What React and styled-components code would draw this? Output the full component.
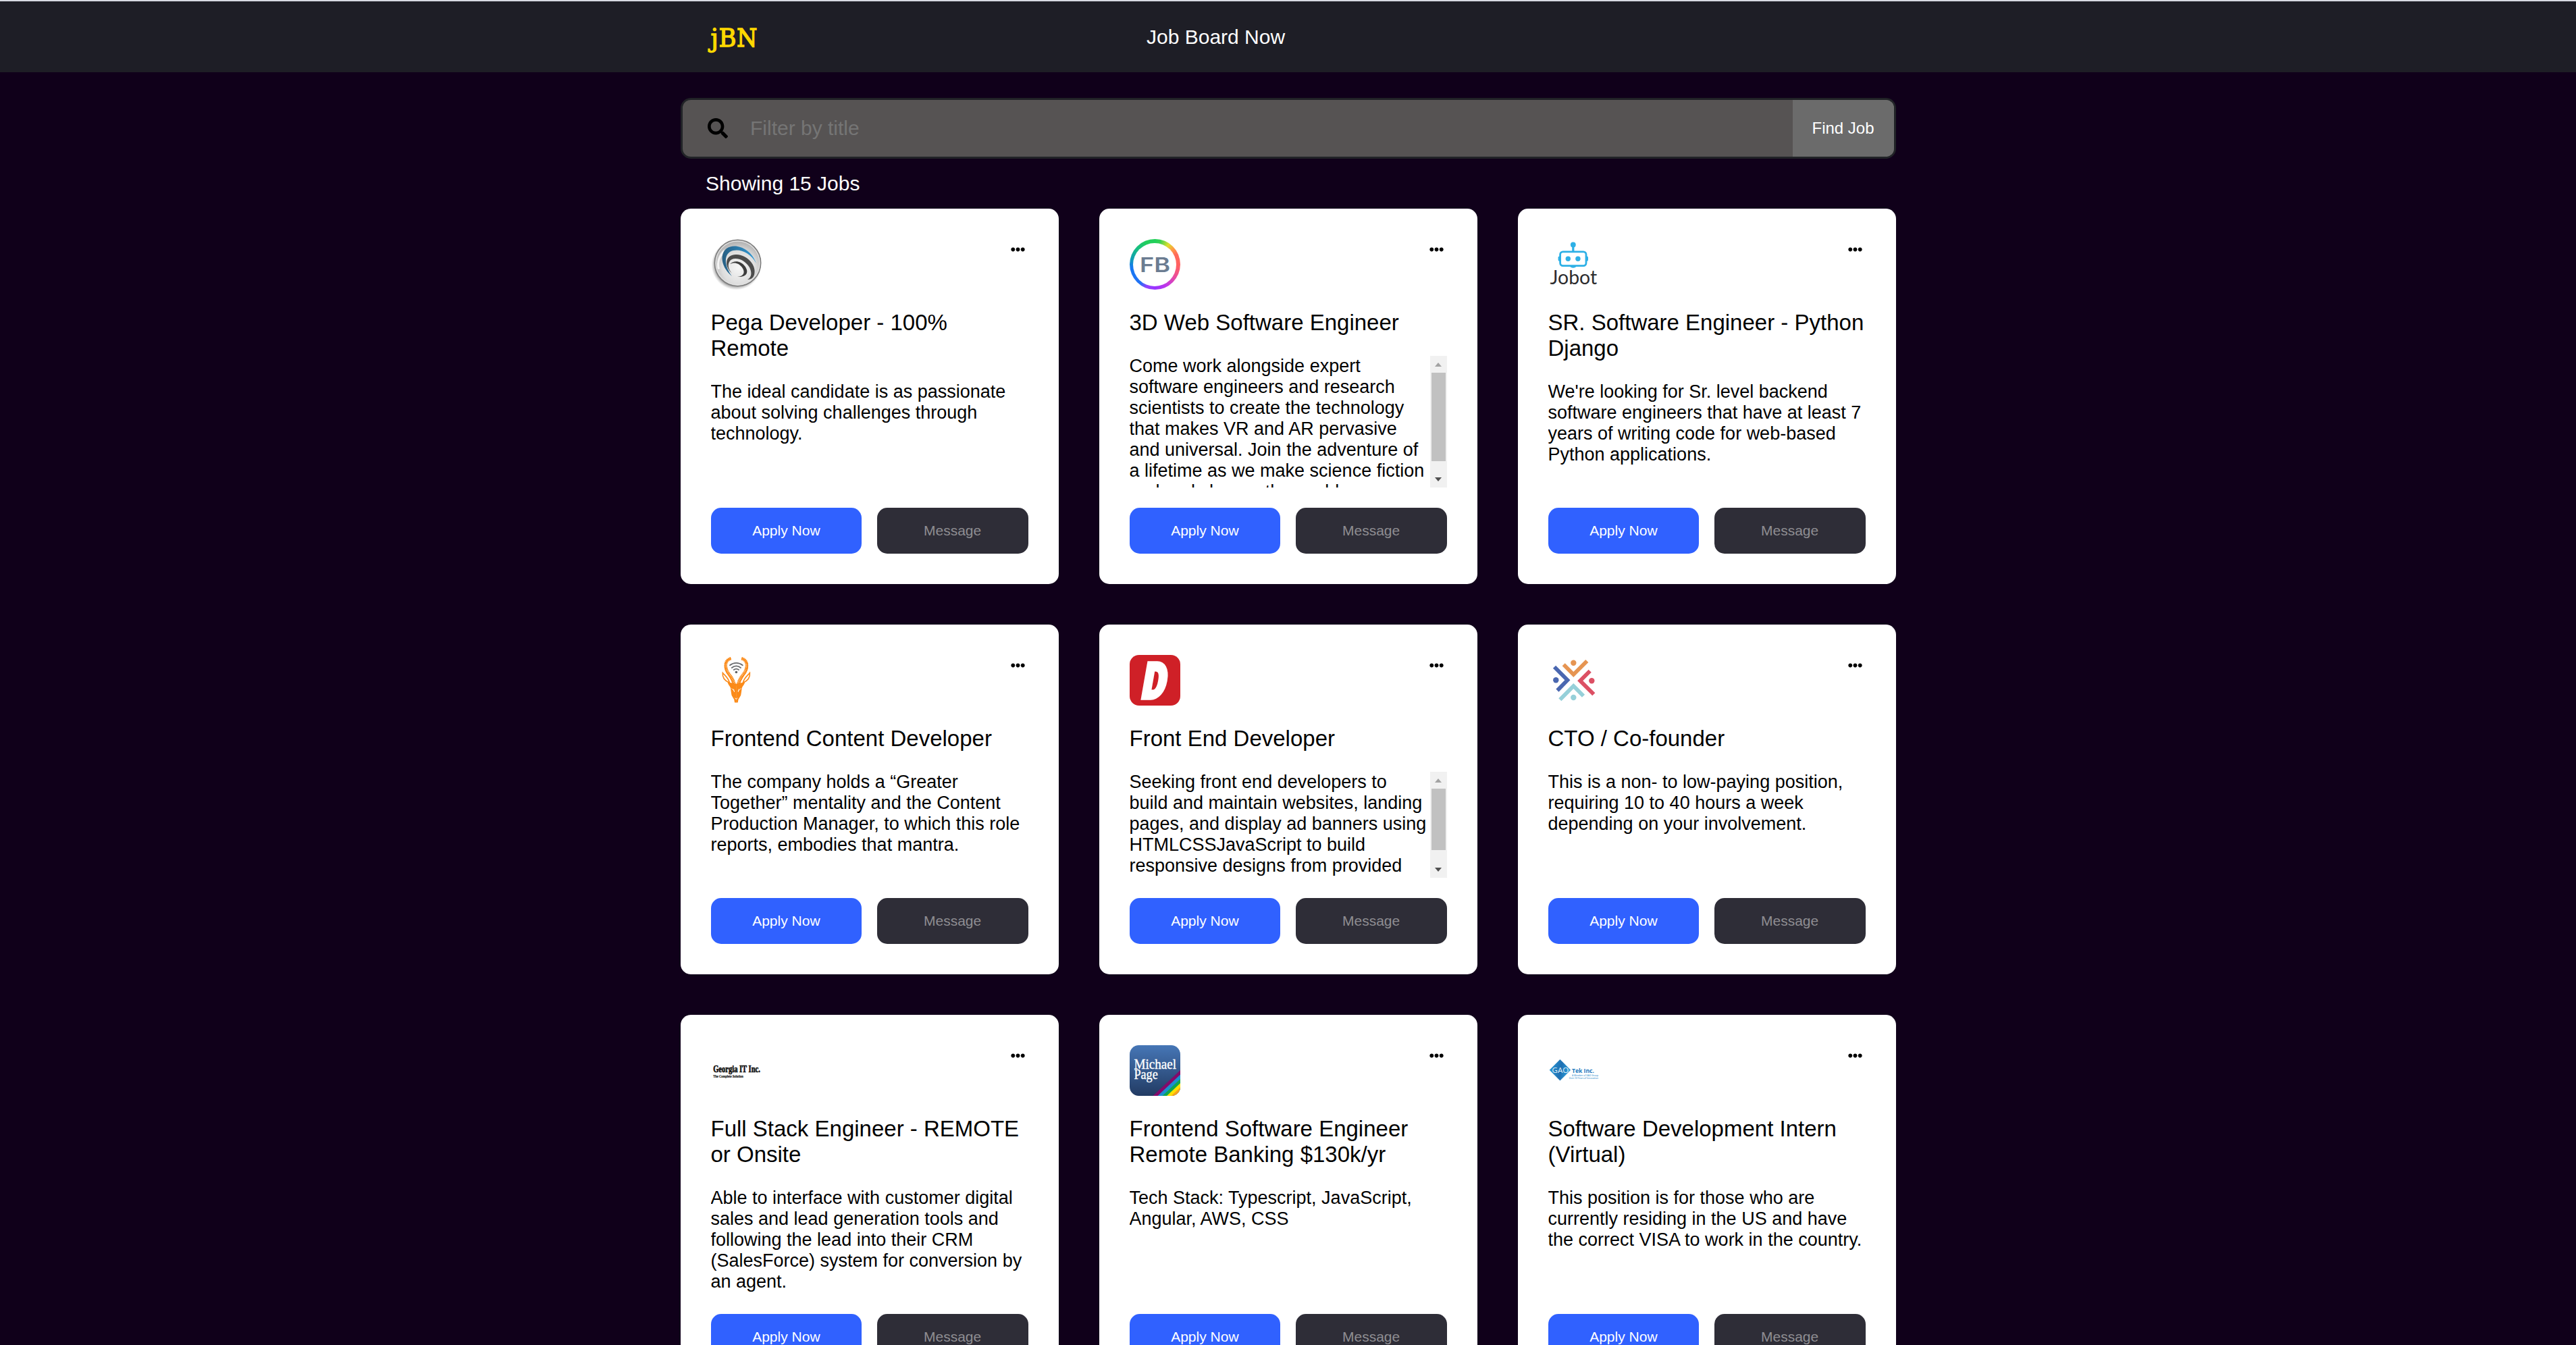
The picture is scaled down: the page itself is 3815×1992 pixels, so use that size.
import React from "react";
import styled, { createGlobalStyle } from "styled-components";
import { FaSearch, FaEllipsisH } from "react-icons/fa";

const GlobalStyle = createGlobalStyle`
  * { box-sizing: border-box; }
  body {
    margin: 0;
    background: #10001a;
    font-family: "Liberation Sans", Arial, sans-serif;
    overflow: hidden;
  }
`;

const Page = styled.div`
  height: 1992px;
  overflow: hidden;
  background: #10001a;
`;

const Header = styled.header`
  height: 107px;
  border-top: 2px solid #d8dae2;
  background: #1e1e26;
`;

const Container = styled.div`
  width: 1800px;
  margin: 0 auto;
`;

const HeaderInner = styled(Container)`
  height: 100%;
  display: flex;
  align-items: center;
  padding-left: 37.5px;
`;

const BrandLogo = styled.svg`
  width: 80px;
  height: 75px;
  overflow: visible;
`;

const SiteTitle = styled.h1`
  margin: 0 0 0 573px;
  font-size: 30px;
  line-height: 34px;
  font-weight: 400;
  color: #fff;
`;

const SearchBar = styled.form`
  display: flex;
  align-items: center;
  height: 90px;
  margin-top: 38px;
  padding-left: 37.5px;
  border: 3px solid #212327;
  border-radius: 15px;
  background: #565353;
  overflow: hidden;
`;

const SearchIcon = styled(FaSearch)`
  flex: none;
  width: 30px;
  height: 30px;
  color: #000;
`;

const SearchInput = styled.input`
  flex: 1;
  min-width: 0;
  height: 100%;
  padding: 0 0 0 33px;
  border: 0;
  outline: 0;
  background: transparent;
  font: 30px "Liberation Sans", Arial, sans-serif;
  color: #fff;
  &::placeholder { color: #757575; }
`;

const FindButton = styled.button`
  width: 150px;
  height: 100%;
  padding: 0;
  border: 0;
  background: #6b6b6b;
  color: #fff;
  font: 24px "Liberation Sans", Arial, sans-serif;
`;

const ResultCount = styled.p`
  margin: 19px 0 20px;
  padding-left: 37.5px;
  font-size: 30px;
  line-height: 35px;
  color: #fff;
`;

const Grid = styled.main`
  display: grid;
  grid-template-columns: repeat(3, 560px);
  gap: 60px;
`;

const Card = styled.article`
  display: flex;
  flex-direction: column;
  padding: 45px;
  border-radius: 15px;
  background: #fff;
  color: #000;
`;

const CardTop = styled.div`
  display: flex;
  justify-content: space-between;
  height: 75px;
`;

const LogoSvg = styled.svg`
  width: 75px;
  height: 75px;
  overflow: visible;
`;

const MoreIcon = styled(FaEllipsisH)`
  width: 21px;
  height: 21px;
  margin: 4.5px 4.5px 0 0;
`;

const JobTitle = styled.h2`
  margin: 30px 0;
  font-size: 33px;
  line-height: 38px;
  font-weight: 400;
`;

const DescriptionBox = styled.div`
  display: flex;
  flex-grow: 1;
  height: 157px;
  overflow: hidden;
`;

const Description = styled.p`
  flex: 1;
  margin: 0;
  font-size: 27px;
  line-height: 31px;
`;

const ScrollTrack = styled.div`
  display: flex;
  flex-direction: column;
  align-items: center;
  width: 25px;
  background: #f1f1f1;
`;

const ScrollArrow = styled.span`
  display: flex;
  flex: none;
  align-items: center;
  justify-content: center;
  height: 25px;
  &::before {
    content: "";
    border: 5.5px solid transparent;
    ${(p) =>
      p.$down
        ? "border-top: 6px solid #505050; border-bottom: 0;"
        : "border-bottom: 6px solid #a3a3a3; border-top: 0;"}
  }
`;

const ScrollThumb = styled.span`
  width: 21px;
  height: ${(p) => p.$length}px;
  margin-bottom: auto;
  background: #c1c1c1;
`;

const Actions = styled.div`
  display: flex;
  gap: 22.5px;
  margin-top: 30px;
`;

const ActionButton = styled.button`
  flex: 1;
  height: 68px;
  padding: 0;
  border: 0;
  border-radius: 15px;
  font: 21px "Liberation Sans", Arial, sans-serif;
  background: ${(p) => (p.$primary ? "#3061ff" : "#2e2d37")};
  color: ${(p) => (p.$primary ? "#fff" : "#8e8d92")};
`;

const RingLogo = styled.div`
  display: grid;
  place-items: center;
  width: 75px;
  height: 75px;
  border-radius: 50%;
  background: conic-gradient(
    #22cf5b 0deg, #35d153 12deg, #dce02c 34deg, #ff9a45 50deg, #ff6a5a 65deg, #ff5f62 95deg,
    #ec4e98 120deg, #c236e6 150deg, #9b33ff 178deg, #9340ff 200deg, #2272f5 218deg,
    #1678f2 262deg, #10a0b0 285deg, #17bd85 310deg, #22cf5b 340deg
  );
`;

const RingCenter = styled.div`
  display: grid;
  place-items: center;
  width: 64px;
  height: 64px;
  border-radius: 50%;
  background: #fff;
`;

function PegaLogo() {
  return (
    <LogoSvg viewBox="0 0 75 75">
      <defs>
        <radialGradient id="orb" cx="0.52" cy="0.6" r="0.55">
          <stop offset="0" stopColor="#f6f6f6" />
          <stop offset="0.65" stopColor="#dedede" />
          <stop offset="1" stopColor="#b4b4b4" />
        </radialGradient>
        <radialGradient id="orbShadow">
          <stop offset="0.85" stopColor="#777" stopOpacity="0.65" />
          <stop offset="1" stopColor="#999" stopOpacity="0" />
        </radialGradient>
        <linearGradient id="orbBlue" x1="0" x2="1">
          <stop offset="0" stopColor="#285f83" />
          <stop offset="1" stopColor="#2f9bd8" />
        </linearGradient>
      </defs>
      <circle cx="37.5" cy="38.5" r="37" fill="url(#orbShadow)" />
      <circle cx="39.5" cy="35.5" r="34.2" fill="url(#orb)" stroke="#7e7e7e" strokeWidth="1.6" />
      <circle cx="39.5" cy="35.5" r="32.4" fill="none" stroke="#e3e3e3" strokeWidth="1.2" />
      <path d="M10 45C7 35 11 22 20 15L17 24C12 30 11 37 13 44Z" fill="#fff" opacity="0.8" />
      <path d="M67 36C59 13 35 5 23 14C11 24 17 44 31 55C20 40 19 25 28 19C39 13 57 18 67 36Z" fill="url(#orbBlue)" />
      <path d="M31 51C17 37 23 22 38 23C55 24 68 40 64 53C62 59 58 60 54 60C60 57 61 50 57 42C49 28 31 25 27 34C24 40 27 46 31 51Z" fill="#4c4c4c" />
      <path d="M28 37C34 31 44 32 50 40C57 49 53 57 39 56C49 55 51 49 46 42C41 35 34 34 28 37Z" fill="#3c3c3c" />
    </LogoSvg>
  );
}

function FacebookLogo() {
  return (
    <RingLogo>
      <RingCenter>
        <svg width="64" height="64" viewBox="5.5 5.5 64 64">
          <text x="15.6" y="48.4" fontFamily="Inter, sans-serif" fontWeight="600" fontSize="29.6" textLength="45" lengthAdjust="spacingAndGlyphs" fill="#6b7c91">FB</text>
        </svg>
      </RingCenter>
    </RingLogo>
  );
}

function JobotLogo() {
  return (
    <LogoSvg viewBox="0 0 75 75">
      <g fill="#2db0e6">
        <circle cx="36.8" cy="8.4" r="3.9" />
        <rect x="35.2" y="10" width="3.2" height="8" />
        <circle cx="29.3" cy="29.2" r="3.7" />
        <circle cx="43.9" cy="29.2" r="3.7" />
        <rect x="14.6" y="25.5" width="4" height="7.4" rx="1.8" />
        <rect x="55" y="25.5" width="4" height="7.4" rx="1.8" />
        <path d="M32 40H41.5C41 43.6 32.6 43.6 32 40Z" />
      </g>
      <rect x="17.6" y="18.8" width="38.4" height="20.8" rx="4" fill="none" stroke="#2db0e6" strokeWidth="2.8" />
      <text x="2.6" y="67" fontFamily="Lato, sans-serif" fontSize="29" textLength="69.5" lengthAdjust="spacingAndGlyphs" fill="#2c2c2e">Jobot</text>
    </LogoSvg>
  );
}

function AntelopeLogo() {
  const half = (
    <g>
      <path d="M29.5 5.3C19 8 20.5 20 26 27.5C31 34 33.6 39 35.4 46" fill="none" stroke="#fb8a18" strokeWidth="4.6" strokeDasharray="1.7 0.5" />
      <path d="M29.5 5.3C18 8.5 19 21 25 28.5C30 35 32 40 34 47" fill="none" stroke="#fb8a18" strokeWidth="1.6" />
      <path d="M27.5 41.5C20 38 16.5 33 17.3 26.5C20 30 26 34 27.5 41.5Z" fill="#fff" stroke="#fb8a18" strokeWidth="1.6" />
      <path d="M37.5 43C33 42 30 41 24.5 40.5C25.5 44.5 28 46 29 49C29.6 54 30 57 30.6 60L34.2 66L35 70.5H37.5Z" fill="#fb8a18" />
      <path d="M30.5 49.5L34.5 53.5M33.5 50.5L34.5 55" stroke="#fff" strokeWidth="0.9" />
      <path d="M35.3 63.8L37.4 65V66" stroke="#fff" strokeWidth="0.8" fill="none" />
    </g>
  );
  return (
    <LogoSvg viewBox="0 0 75 75">
      {half}
      <g transform="translate(74.7 0) scale(-1 1)">{half}</g>
      <g fill="none" stroke="#6b6d70" strokeWidth="1.9" strokeLinecap="round">
        <path d="M28 15.2C33.5 10.8 41.3 10.8 46.8 15.2" />
        <path d="M30.8 19C34.8 15.7 40 15.7 44 19" />
        <path d="M33.8 22C36 20.3 38.8 20.3 41 22" />
      </g>
      <circle cx="37.4" cy="25.5" r="1.8" fill="#5b5d60" />
    </LogoSvg>
  );
}

function DLogo() {
  return (
    <LogoSvg viewBox="0 0 75 75">
      <rect width="75" height="75" rx="14" fill="#cf2027" />
      <g transform="translate(16 63.6) skewX(-10) scale(0.74 1)">
        <text x="0" y="0" fontFamily="Roboto, sans-serif" fontWeight="900" fontSize="73" fill="#fff" stroke="#fff" strokeWidth="5.5">D</text>
      </g>
    </LogoSvg>
  );
}

function CollabLogo() {
  return (
    <LogoSvg viewBox="0 0 75 75">
      <g fill="none" strokeWidth="5.8">
        <path d="M22.7 14.3L37.3 29L57.3 9" stroke="#e69552" />
        <path d="M9 17.7L28.4 37.3L13.4 52.6" stroke="#4a67b0" />
        <path d="M61.7 23.7L47.2 38.3L67.3 58.3" stroke="#dc5064" />
        <path d="M17.3 66.3L37.3 46L52 60.7" stroke="#96d0d9" />
      </g>
      <circle cx="37.3" cy="11.8" r="4.2" fill="#e69552" />
      <circle cx="11.3" cy="37.3" r="4.2" fill="#4a67b0" />
      <circle cx="64.3" cy="38.3" r="4.2" fill="#dc5064" />
      <circle cx="37.3" cy="63" r="4.2" fill="#96d0d9" />
    </LogoSvg>
  );
}

function GeorgiaLogo() {
  return (
    <LogoSvg viewBox="0 0 75 75" fontFamily="Liberation Serif, serif" fontWeight="700" fill="#111" stroke="#111">
      <text x="3.2" y="40.2" fontSize="15.4" strokeWidth="0.7" textLength="69.6" lengthAdjust="spacingAndGlyphs">Georgia IT Inc.</text>
      <text x="3.2" y="47.6" fontSize="5.8" strokeWidth="0.2" textLength="44.6" lengthAdjust="spacingAndGlyphs">The Complete Solution</text>
    </LogoSvg>
  );
}

function MichaelPageLogo() {
  return (
    <LogoSvg viewBox="0 0 75 75">
      <defs>
        <linearGradient id="mpBlue" x1="0" y1="0" x2="0" y2="1">
          <stop offset="0" stopColor="#4676b6" />
          <stop offset="1" stopColor="#223b63" />
        </linearGradient>
        <clipPath id="mpClip"><rect width="75" height="75" rx="13.5" /></clipPath>
      </defs>
      <g clipPath="url(#mpClip)">
        <rect width="75" height="75" fill="url(#mpBlue)" />
        <path d="M34.5 75L75 37V75Z" fill="#830a6b" />
        <path d="M41.5 75L75 43.5V75Z" fill="#1b8fd0" />
        <path d="M48.5 75L75 50V75Z" fill="#0fa650" />
        <path d="M55 75L75 56.3V75Z" fill="#ffe000" />
        <path d="M61.5 75L75 62.5V75Z" fill="#f9a11f" />
      </g>
      <g fontFamily="Liberation Serif, serif" fontSize="20.5" fill="#fff" stroke="#fff" strokeWidth="0.35">
        <text x="6.4" y="35.4" textLength="62.6" lengthAdjust="spacingAndGlyphs">Michael</text>
        <text x="6.4" y="50.4" textLength="35.4" lengthAdjust="spacingAndGlyphs">Page</text>
      </g>
    </LogoSvg>
  );
}

function GaoLogo() {
  return (
    <LogoSvg viewBox="0 0 75 75" fontFamily="Open Sans, sans-serif">
      <defs>
        <linearGradient id="gaoBlue" x1="0" y1="0" x2="1" y2="0.2">
          <stop offset="0" stopColor="#2a9bd8" />
          <stop offset="0.6" stopColor="#1f70b2" />
          <stop offset="1" stopColor="#2c9fdb" />
        </linearGradient>
      </defs>
      <path d="M1.7 36.8L17.4 21L33.2 36.8L17.4 52.6Z" fill="url(#gaoBlue)" />
      <text x="5.6" y="40.9" fontSize="11.4" textLength="24.6" lengthAdjust="spacingAndGlyphs" fill="#e4f2fa">GAO</text>
      <text x="35" y="41" fontSize="9.6" fontWeight="700" textLength="33" lengthAdjust="spacingAndGlyphs" fill="#2278bd">Tek Inc.</text>
      <g fontSize="3.5" fontWeight="600" fill="#4f9fd4">
        <text x="35" y="45.6" textLength="39" lengthAdjust="spacingAndGlyphs">A Member of GAO Group</text>
        <text x="30.7" y="50.4" textLength="43.3" lengthAdjust="spacingAndGlyphs">Over 20 Years of Innovation</text>
      </g>
    </LogoSvg>
  );
}

const jobs = [
  {
    Logo: PegaLogo,
    title: "Pega Developer - 100% Remote",
    text: "The ideal candidate is as passionate about solving challenges through technology.",
  },
  {
    Logo: FacebookLogo,
    title: "3D Web Software Engineer",
    text: "Come work alongside expert software engineers and research scientists to create the technology that makes VR and AR pervasive and universal. Join the adventure of a lifetime as we make science fiction real and change the world.",
    thumb: 131,
  },
  {
    Logo: JobotLogo,
    title: "SR. Software Engineer - Python Django",
    text: "We're looking for Sr. level backend software engineers that have at least 7 years of writing code for web-based Python applications.",
  },
  {
    Logo: AntelopeLogo,
    title: "Frontend Content Developer",
    text: "The company holds a “Greater Together” mentality and the Content Production Manager, to which this role reports, embodies that mantra.",
  },
  {
    Logo: DLogo,
    title: "Front End Developer",
    text: "Seeking front end developers to build and maintain websites, landing pages, and display ad banners using HTMLCSSJavaScript to build responsive designs from provided",
    thumb: 91,
  },
  {
    Logo: CollabLogo,
    title: "CTO / Co-founder",
    text: "This is a non- to low-paying position, requiring 10 to 40 hours a week depending on your involvement.",
  },
  {
    Logo: GeorgiaLogo,
    title: "Full Stack Engineer - REMOTE or Onsite",
    text: "Able to interface with customer digital sales and lead generation tools and following the lead into their CRM (SalesForce) system for conversion by an agent.",
  },
  {
    Logo: MichaelPageLogo,
    title: "Frontend Software Engineer Remote Banking $130k/yr",
    text: "Tech Stack: Typescript, JavaScript, Angular, AWS, CSS",
  },
  {
    Logo: GaoLogo,
    title: "Software Development Intern (Virtual)",
    text: "This position is for those who are currently residing in the US and have the correct VISA to work in the country.",
  },
];

function JobCard({ job }) {
  const { Logo, title, text, thumb } = job;
  return (
    <Card>
      <CardTop>
        <Logo />
        <MoreIcon />
      </CardTop>
      <JobTitle>{title}</JobTitle>
      <DescriptionBox>
        <Description>{text}</Description>
        {thumb && (
          <ScrollTrack>
            <ScrollArrow />
            <ScrollThumb $length={thumb} />
            <ScrollArrow $down />
          </ScrollTrack>
        )}
      </DescriptionBox>
      <Actions>
        <ActionButton $primary>Apply Now</ActionButton>
        <ActionButton>Message</ActionButton>
      </Actions>
    </Card>
  );
}

export default function App() {
  return (
    <>
      <GlobalStyle />
      <Page>
        <Header>
          <HeaderInner>
            <BrandLogo viewBox="0 0 80 75" fontFamily="DejaVu Serif, serif" fill="#ffd800" stroke="#ffd800" strokeWidth="1.4">
              <text x="7.6" y="51.6" fontSize="38" textLength="11.4" lengthAdjust="spacingAndGlyphs">j</text>
              <text x="19.4" y="51.6" fontSize="38" textLength="26" lengthAdjust="spacingAndGlyphs">B</text>
              <text x="46" y="51.6" fontSize="38" textLength="30.5" lengthAdjust="spacingAndGlyphs">N</text>
            </BrandLogo>
            <SiteTitle>Job Board Now</SiteTitle>
          </HeaderInner>
        </Header>
        <Container>
          <SearchBar onSubmit={(e) => e.preventDefault()}>
            <SearchIcon />
            <SearchInput placeholder="Filter by title" />
            <FindButton>Find Job</FindButton>
          </SearchBar>
          <ResultCount>Showing 15 Jobs</ResultCount>
          <Grid>
            {jobs.map((job) => (
              <JobCard key={job.title} job={job} />
            ))}
          </Grid>
        </Container>
      </Page>
    </>
  );
}
